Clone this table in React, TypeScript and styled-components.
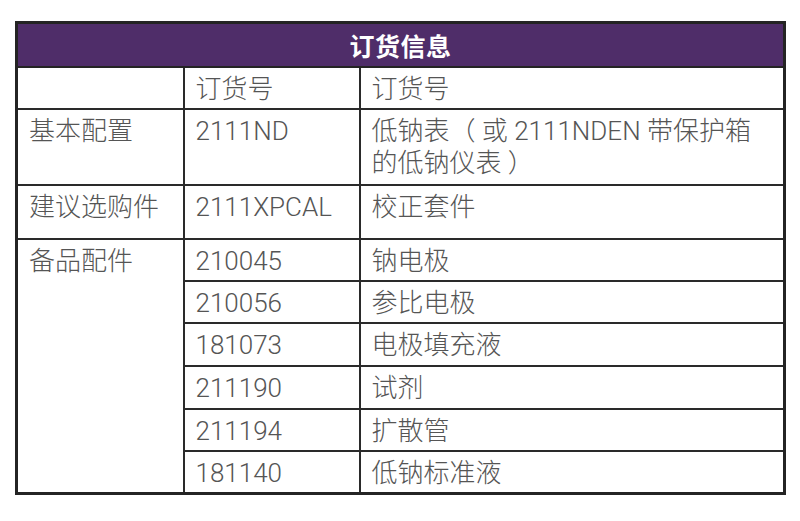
import React from "react";
import styled, { createGlobalStyle } from "styled-components";

const GlobalStyle = createGlobalStyle`
  html, body {
    margin: 0;
    padding: 0;
    background: #fff;
  }
  body {
    font-family: "Liberation Sans", "Noto Sans CJK SC", sans-serif;
  }
`;

const Page = styled.div`
  padding: 21px 0 0 15px;
`;

const Table = styled.table`
  border-collapse: collapse;
  table-layout: fixed;
  width: 771px;
  border: 3px solid #242424;
`;

const HeaderCell = styled.th`
  background: #4f2d69;
  color: #fff;
  font-size: 25px;
  font-weight: bold;
  text-align: center;
  vertical-align: middle;
  padding: 0;
  border: 2px solid #242424;
  letter-spacing: 0.5px;
`;

const Row = styled.tr<{ $h: number }>`
  height: ${(p) => p.$h}px;
`;

const Cell = styled.td`
  border: 2px solid #2a2a2a;
  padding: 5px 10px 0 11px;
  vertical-align: top;
  color: #555;
  font-family: Roboto, "Noto Sans CJK SC", sans-serif;
  font-weight: 300;
  font-size: 26px;
  line-height: 32px;
  white-space: nowrap;
`;

const parts = [
  { code: "210045", name: "钠电极", h: 42 },
  { code: "210056", name: "参比电极", h: 42 },
  { code: "181073", name: "电极填充液", h: 43 },
  { code: "211190", name: "试剂", h: 43 },
  { code: "211194", name: "扩散管", h: 42 },
  { code: "181140", name: "低钠标准液", h: 43 },
];

export default function App() {
  return (
    <Page>
      <GlobalStyle />
      <Table>
        <colgroup>
          <col style={{ width: 167 }} />
          <col style={{ width: 176 }} />
          <col />
        </colgroup>
        <tbody>
          <Row $h={44}>
            <HeaderCell colSpan={3}>订货信息</HeaderCell>
          </Row>
          <Row $h={42}>
            <Cell />
            <Cell>订货号</Cell>
            <Cell>订货号</Cell>
          </Row>
          <Row $h={76}>
            <Cell>基本配置</Cell>
            <Cell>2111ND</Cell>
            <Cell>
              低钠表（ 或 2111NDEN 带保护箱
              <br />
              的低钠仪表 ）
            </Cell>
          </Row>
          <Row $h={54}>
            <Cell>建议选购件</Cell>
            <Cell>2111XPCAL</Cell>
            <Cell>校正套件</Cell>
          </Row>
          {parts.map((p, i) => (
            <Row $h={p.h} key={p.code}>
              {i === 0 && <Cell rowSpan={parts.length}>备品配件</Cell>}
              <Cell>{p.code}</Cell>
              <Cell>{p.name}</Cell>
            </Row>
          ))}
        </tbody>
      </Table>
    </Page>
  );
}
